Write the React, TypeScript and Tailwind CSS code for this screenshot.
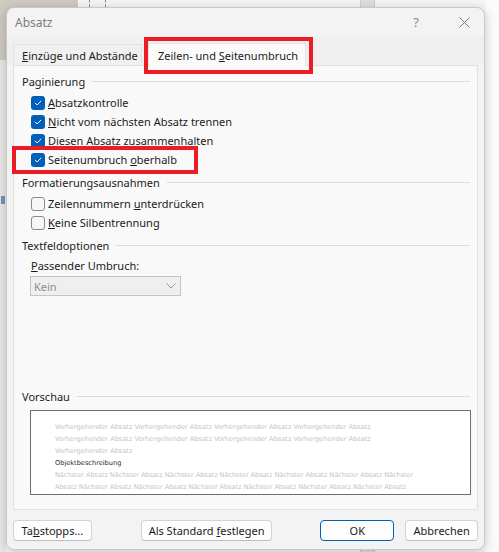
import React from "react";

const FONT = { fontFamily: '"Noto Sans", "Open Sans", sans-serif' };

function Check({ checked }: { checked: boolean }) {
  if (checked) {
    return (
      <span className="w-[14px] h-[14px] rounded-[3px] bg-[#005fb8] flex items-center justify-center shrink-0">
        <svg width="10" height="10" viewBox="0 0 10 10" fill="none">
          <path d="M2.3 5.1 L4.2 7 L7.8 3.2" stroke="#ffffff" strokeWidth="1" strokeLinecap="round" strokeLinejoin="round" />
        </svg>
      </span>
    );
  }
  return <span className="w-[14px] h-[14px] rounded-[3px] border border-[#8a8a8a] bg-[#f7f7f7] shrink-0" />;
}

function Row({ checked, children }: { checked: boolean; children: React.ReactNode }) {
  return (
    <div className="h-[19px] flex items-center gap-[3px] pl-[17px]">
      <Check checked={checked} />
      <span className="text-[11px] text-[#1b1b1b] leading-none">{children}</span>
    </div>
  );
}

function GroupHead({ label, className = "" }: { label: string; className?: string }) {
  return (
    <div className={"h-[19px] flex items-center gap-[7px] pl-[8px] pr-[7px] " + className}>
      <span className="text-[11px] text-[#1b1b1b] leading-none whitespace-nowrap">{label}</span>
      <span className="flex-1 h-px bg-[#dcdcdc]" />
    </div>
  );
}

function Btn({ children, primary, className = "" }: { children: React.ReactNode; primary?: boolean; className?: string }) {
  return (
    <div
      className={
        "h-[21px] rounded-[4px] bg-[#fdfdfd] flex items-center justify-center " +
        (primary ? "border border-[#005fb8] " : "border border-[#d3d3d3] border-b-[#bdbdbd] ") +
        className
      }
    >
      <span className="text-[11px] text-[#1b1b1b] leading-none whitespace-nowrap">{children}</span>
    </div>
  );
}

const prev1 = "Vorhergehender Absatz Vorhergehender Absatz Vorhergehender Absatz Vorhergehender Absatz";
const next1 = "Nächster Absatz Nächster Absatz Nächster Absatz Nächster Absatz Nächster Absatz Nächster Absatz Nächster";
const next2 = "Absatz Nächster Absatz Nächster Absatz Nächster Absatz Nächster Absatz Nächster Absatz Nächster Absatz";

export default function App() {
  return (
    <div className="relative w-[499px] h-[552px] overflow-hidden bg-[#f7f7f7]" style={FONT}>
      {/* backdrop: document window behind the dialog */}
      <div className="absolute left-0 top-0 w-[78px] h-[60px] bg-[#cfcbc3]" />
      <div className="absolute left-0 top-[60px] w-[6px] h-[492px] bg-[#e9e9e9]" />
      <div className="absolute left-[1px] top-[196px] w-[4px] h-[8px] bg-[#7a93b8]" />
      <div className="absolute left-[89px] top-0 w-px h-[7px] border-l border-dashed border-[#8c8c8c]" />
      <div className="absolute left-[105px] top-0 w-px h-[7px] border-l border-dashed border-[#8c8c8c]" />
      <div className="absolute left-[360px] top-0 w-[15px] h-[552px] bg-[#e1e1e1] border-x border-[#cfcfcf]" />
      <div className="absolute left-[485px] top-0 w-[14px] h-[552px] bg-[#fbfbfb]" />

      {/* dialog */}
      <div className="absolute left-[6px] top-[7px] w-[479px] h-[543px] rounded-[8px] bg-[#f3f3f3] border border-[#c9c9c9] shadow-[0_2px_12px_rgba(0,0,0,0.22)] flex flex-col">
        {/* title bar */}
        <div className="h-[29px] flex items-center pl-[8px] pr-[14px] shrink-0">
          <span className="text-[12px] text-[#7d7d7d] leading-none">Absatz</span>
          <span className="ml-auto text-[13px] text-[#8a8a8a] leading-none mr-[40px]">?</span>
          <svg width="11" height="11" viewBox="0 0 11 11">
            <path d="M0.5 0.5 L10.5 10.5 M10.5 0.5 L0.5 10.5" stroke="#7a7a7a" strokeWidth="1" />
          </svg>
        </div>

        {/* tab strip */}
        <div className="h-[28px] bg-[#efefef] flex items-end px-[6px] shrink-0 relative">
          <div className="h-[21px] w-[129px] border border-b-0 border-[#e2e2e2] bg-[#f0f0f0] flex items-center pl-[8px]">
            <span className="text-[11px] text-[#1b1b1b] leading-none whitespace-nowrap">
              <u>E</u>inzüge und Abstände
            </span>
          </div>
          <div className="ml-[6px] -mb-px h-[23px] w-[158px] border border-b-0 border-[#e2e2e2] bg-[#fafafa] flex items-center pl-[9px] relative z-10">
            <span className="text-[11px] text-[#1b1b1b] leading-none whitespace-nowrap">
              Zeilen- und <u>S</u>eitenumbruch
            </span>
          </div>
        </div>

        {/* content panel */}
        <div className="mx-[6px] h-[445px] border border-[#e2e2e2] bg-[#f9f9f9] flex flex-col pt-[6px] shrink-0">
          <GroupHead label="Paginierung" />
          <div className="mt-[2px]">
            <Row checked><u>A</u>bsatzkontrolle</Row>
            <Row checked><u>N</u>icht vom nächsten Absatz trennen</Row>
            <Row checked>Diesen Absatz zusammenhalten</Row>
            <Row checked>Seitenumbruch <u>o</u>berhalb</Row>
          </div>
          <GroupHead label="Formatierungsausnahmen" className="mt-[4px]" />
          <div className="mt-[2px]">
            <Row checked={false}>Zeilennummern <u>u</u>nterdrücken</Row>
            <Row checked={false}><u>K</u>eine Silbentrennung</Row>
          </div>
          <GroupHead label="Textfeldoptionen" className="mt-[4px]" />
          <div className="mt-[1px] h-[19px] flex items-center pl-[17px]">
            <span className="text-[11px] text-[#1b1b1b] leading-none">
              <u>P</u>assender Umbruch:
            </span>
          </div>
          <div className="mt-[1px] ml-[16px] w-[151px] h-[20px] border border-[#c4c4c4] bg-[#efefef] flex items-center pl-[3px] pr-[3px]">
            <span className="text-[11px] text-[#8d8d8d] leading-none">Kein</span>
            <svg className="ml-auto" width="12" height="8" viewBox="0 0 12 8">
              <path d="M1.5 1.5 L6 6 L10.5 1.5" stroke="#9a9a9a" strokeWidth="1" fill="none" />
            </svg>
          </div>

          <GroupHead label="Vorschau" className="mt-[91px]" />
          <div
            className="mt-[4px] ml-[16px] mr-[6px] h-[85px] border border-[#6e6e6e] bg-white pt-[10px] pl-[24px] text-[6.6px] leading-[12px] text-[#c4c4c4] whitespace-nowrap"
            style={{ fontFamily: '"DejaVu Sans", sans-serif' }}
          >
            <div>{prev1}</div>
            <div>{prev1}</div>
            <div>Vorhergehender Absatz</div>
            <div className="text-[#2a2a2a]">Objektbeschreibung</div>
            <div className="tracking-[-0.07px]">{next1}</div>
            <div className="tracking-[-0.07px]">{next2}</div>
          </div>
        </div>

        {/* buttons */}
        <div className="mt-[10px] flex items-center px-[6px]">
          <Btn className="w-[79px]">
            Ta<u>b</u>stopps...
          </Btn>
          <Btn className="ml-[49px] w-[132px]">
            Als Standard <u>f</u>estlegen
          </Btn>
          <Btn primary className="ml-[48px] w-[74px]">
            OK
          </Btn>
          <Btn className="ml-[11px] w-[73px]">Abbrechen</Btn>
        </div>
      </div>

      {/* red annotation boxes */}
      <div className="absolute left-[144px] top-[37px] w-[169px] h-[37px] border-[4px] border-[#ec1c24]" />
      <div className="absolute left-[12px] top-[146px] w-[186px] h-[28px] border-[4px] border-[#ec1c24]" />
    </div>
  );
}
